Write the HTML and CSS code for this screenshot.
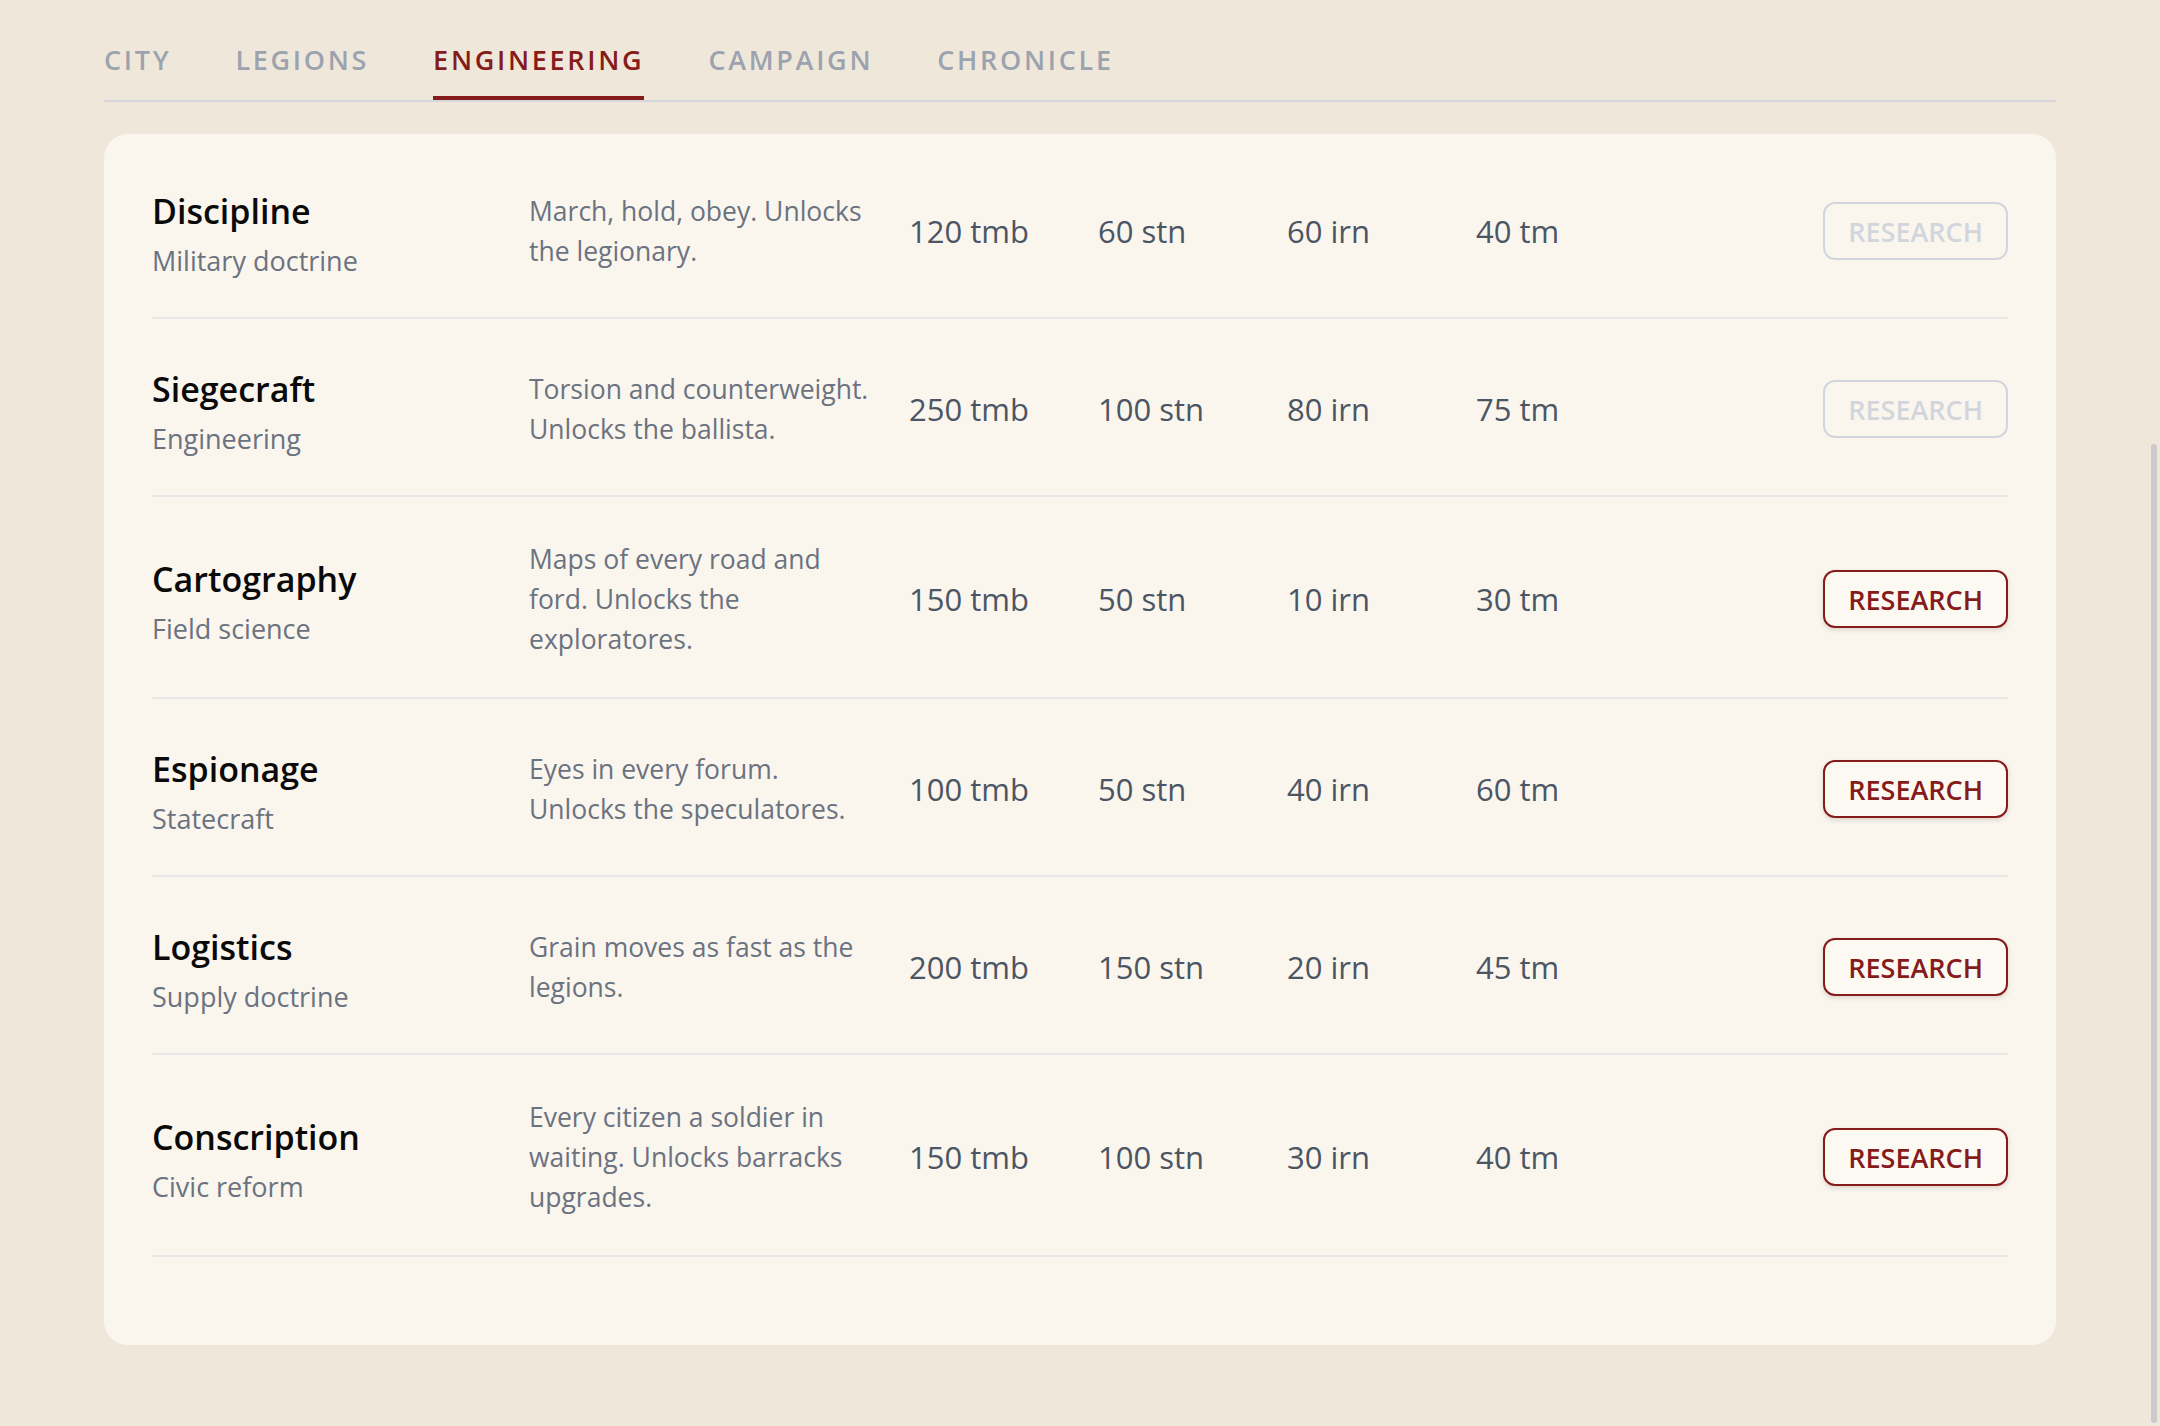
FILE: index.html
```html
<!DOCTYPE html>
<html lang="en">
<head>
  <meta charset="UTF-8">
  <meta name="viewport" content="width=device-width, initial-scale=1.0">
  <title>Engineering - Imperium</title>
  <link rel="stylesheet" href="styles.css">
</head>
<body>
  <div class="container">
    <nav class="tabs">
      <a href="#city">City</a>
      <a href="#legions">Legions</a>
      <a href="#engineering" class="active">Engineering</a>
      <a href="#campaign">Campaign</a>
      <a href="#chronicle">Chronicle</a>
    </nav>

    <div class="card">
      <div class="tech-row">
        <div class="tech-name">
          <h2>Discipline</h2>
          <p>Military doctrine</p>
        </div>
        <p class="tech-desc">March, hold, obey. Unlocks<br>the legionary.</p>
        <span class="cost">120 tmb</span>
        <span class="cost">60 stn</span>
        <span class="cost">60 irn</span>
        <span class="cost">40 tm</span>
        <div class="tech-action"><button class="btn-research" disabled>Research</button></div>
      </div>

      <div class="tech-row">
        <div class="tech-name">
          <h2>Siegecraft</h2>
          <p>Engineering</p>
        </div>
        <p class="tech-desc">Torsion and counterweight.<br>Unlocks the ballista.</p>
        <span class="cost">250 tmb</span>
        <span class="cost">100 stn</span>
        <span class="cost">80 irn</span>
        <span class="cost">75 tm</span>
        <div class="tech-action"><button class="btn-research" disabled>Research</button></div>
      </div>

      <div class="tech-row">
        <div class="tech-name">
          <h2>Cartography</h2>
          <p>Field science</p>
        </div>
        <p class="tech-desc">Maps of every road and<br>ford. Unlocks the<br>exploratores.</p>
        <span class="cost">150 tmb</span>
        <span class="cost">50 stn</span>
        <span class="cost">10 irn</span>
        <span class="cost">30 tm</span>
        <div class="tech-action"><button class="btn-research">Research</button></div>
      </div>

      <div class="tech-row">
        <div class="tech-name">
          <h2>Espionage</h2>
          <p>Statecraft</p>
        </div>
        <p class="tech-desc">Eyes in every forum.<br>Unlocks the speculatores.</p>
        <span class="cost">100 tmb</span>
        <span class="cost">50 stn</span>
        <span class="cost">40 irn</span>
        <span class="cost">60 tm</span>
        <div class="tech-action"><button class="btn-research">Research</button></div>
      </div>

      <div class="tech-row">
        <div class="tech-name">
          <h2>Logistics</h2>
          <p>Supply doctrine</p>
        </div>
        <p class="tech-desc">Grain moves as fast as the<br>legions.</p>
        <span class="cost">200 tmb</span>
        <span class="cost">150 stn</span>
        <span class="cost">20 irn</span>
        <span class="cost">45 tm</span>
        <div class="tech-action"><button class="btn-research">Research</button></div>
      </div>

      <div class="tech-row">
        <div class="tech-name">
          <h2>Conscription</h2>
          <p>Civic reform</p>
        </div>
        <p class="tech-desc">Every citizen a soldier in<br>waiting. Unlocks barracks<br>upgrades.</p>
        <span class="cost">150 tmb</span>
        <span class="cost">100 stn</span>
        <span class="cost">30 irn</span>
        <span class="cost">40 tm</span>
        <div class="tech-action"><button class="btn-research">Research</button></div>
      </div>
    </div>
  </div>

  <div class="scroll-thumb"></div>
</body>
</html>
```

FILE: styles.css
```css
* { margin: 0; padding: 0; box-sizing: border-box; font-family: 'Open Sans', 'Noto Sans', sans-serif; }
body { background: #efe8da; color: #111; overflow: hidden; }
.container { width: 1952px; margin: 0 auto; padding-top: 40px; }

/* tabs */
.tabs { display: flex; gap: 64px; border-bottom: 2px solid #d4d6da; }
.tabs a { color: #9ca3af; text-decoration: none; text-transform: uppercase; font-size: 27px; font-weight: 600; letter-spacing: 0.1em; line-height: 40px; padding-bottom: 16px; border-bottom: 4px solid transparent; margin-bottom: -2px; }
.tabs a.active { color: #861b1b; border-bottom-color: #861b1b; margin-bottom: 0; }

/* research list */
.card { background: #faf6ee; border-radius: 24px; margin-top: 32px; padding: 7px 48px 88px; }
.tech-row { display: grid; grid-template-columns: 377px 380px 189px 189px 189px 1fr auto; align-items: center; padding: 40px 0 36px; border-bottom: 2px solid #e6e6e8; }
.tech-name h2 { font-size: 34px; font-weight: 600; line-height: 60px; color: #0a0a0a; }
.tech-name p { font-size: 27px; line-height: 40px; color: #6b7280; }
.tech-desc { font-size: 26.5px; line-height: 40px; padding: 2px 0; color: #6b7280; }
.cost { font-size: 31px; color: #4b5563; }
.tech-action { display: flex; justify-content: flex-end; }

.btn-research { background: #fcf8f2; color: #861b1b; border: 2px solid #861b1b; border-radius: 12px; font-size: 27px; font-weight: 600; text-transform: uppercase; height: 58px; padding: 0 23px; cursor: pointer; box-shadow: 0 2px 5px rgba(90, 60, 40, 0.18); }
.btn-research:hover { background: #861b1b; color: #fff; }
.btn-research:disabled { background: transparent; color: #d2d6dc; border-color: #d2d6dc; box-shadow: none; cursor: default; }

.scroll-thumb { position: fixed; right: 3px; top: 444px; bottom: 3px; width: 6px; border-radius: 3px; background: #cbcbcb; }
```
